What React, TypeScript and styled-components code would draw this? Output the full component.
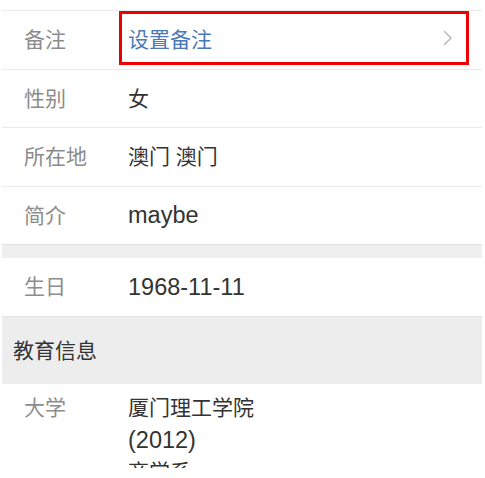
import React from "react";
import styled, { createGlobalStyle } from "styled-components";

const GlobalStyle = createGlobalStyle`
  html, body {
    margin: 0;
    padding: 0;
    background: #fff;
  }
  body {
    font-family: "Liberation Sans", "Noto Sans CJK SC", sans-serif;
  }
`;

type Item = {
  label: string;
  value: string[];
  link?: boolean;
};

const basic: Item[] = [
  { label: "备注", value: ["设置备注"], link: true },
  { label: "性别", value: ["女"] },
  { label: "所在地", value: ["澳门 澳门"] },
  { label: "简介", value: ["maybe"] },
];

const birthday: Item[] = [{ label: "生日", value: ["1968-11-11"] }];

const education: Item[] = [
  { label: "大学", value: ["厦门理工学院", "(2012)", "商学系"] },
];

// latin-only strings get a bigger size, like the system font in the shot
const isLatin = (s: string) => /^[\x00-\x7f]+$/.test(s);

const Chevron = () => (
  <svg width="10" height="16" viewBox="0 0 10 16" fill="none">
    <polyline
      points="1.5,1.5 8,8 1.5,14.5"
      stroke="#b4b4b4"
      strokeWidth="1.4"
      strokeLinecap="round"
      strokeLinejoin="round"
    />
  </svg>
);

export default function App() {
  return (
    <>
      <GlobalStyle />
      <Viewport>
        <Page>
          <TopSpacer />
          <Group>
            {basic.map((item) => (
              <Row key={item.label}>
                <Label>{item.label}</Label>
                <Value $link={item.link}>
                  <Text $latin={isLatin(item.value[0])}>{item.value[0]}</Text>
                  {item.link && <Chevron />}
                </Value>
              </Row>
            ))}
          </Group>
          <Gap />
          <Group>
            {birthday.map((item) => (
              <Row key={item.label}>
                <Label>{item.label}</Label>
                <Value>
                  <Text $latin={isLatin(item.value[0])}>{item.value[0]}</Text>
                </Value>
              </Row>
            ))}
          </Group>
          <SectionHeader>教育信息</SectionHeader>
          <Group>
            {education.map((item) => (
              <TallRow key={item.label}>
                <Label>{item.label}</Label>
                <Lines>
                  {item.value.map((line) => (
                    <Line key={line} $latin={isLatin(line)}>
                      {line}
                    </Line>
                  ))}
                </Lines>
              </TallRow>
            ))}
          </Group>
        </Page>
      </Viewport>
    </>
  );
}

const Viewport = styled.div`
  height: 468px;
  overflow: hidden;
`;

const Page = styled.div`
  margin: 0 3px 0 2px;
  background: #fff;
`;

const TopSpacer = styled.div`
  height: 10px;
  border-bottom: 1px solid #ebebeb;
`;

const Group = styled.div`
  background: #fff;
`;

const Row = styled.div`
  display: grid;
  grid-template-columns: 117px 1fr;
  align-items: center;
  height: 58.5px;
  padding: 0 13px 3px 0;
  box-sizing: border-box;
  border-bottom: 1px solid #ebebeb;
  font-size: 21px;

  &:last-child {
    border-bottom: none;
    height: 57.5px;
  }
`;

const TallRow = styled.div`
  display: grid;
  grid-template-columns: 126px 1fr;
  align-items: start;
  padding-top: 8px;
  font-size: 21px;
  line-height: 31px;
`;

const Label = styled.div`
  padding-left: 22px;
  color: #8c8c8c;
`;

const Value = styled.div<{ $link?: boolean }>`
  display: flex;
  align-items: center;
  justify-content: space-between;
  color: ${(p) => (p.$link ? "#4b79b6" : "#333")};
  height: ${(p) => (p.$link ? "54px" : "auto")};
  padding: ${(p) => (p.$link ? "0 13px 0 6px" : "0 0 0 9px")};
  border: ${(p) => (p.$link ? "3px solid #ee0000" : "none")};
  box-sizing: border-box;
`;

const Text = styled.span<{ $latin?: boolean }>`
  font-size: ${(p) => (p.$latin ? "23.5px" : "21px")};
  padding-top: ${(p) => (p.$latin ? "4px" : "0")};
`;

const Lines = styled.div`
  color: #333;
`;

const Line = styled.div<{ $latin?: boolean }>`
  font-size: ${(p) => (p.$latin ? "23.5px" : "21px")};
  padding-top: ${(p) => (p.$latin ? "2px" : "0")};
`;

const Gap = styled.div`
  height: 13px;
  background: #efefef;
  border-top: 1px solid #e2e2e2;
`;

const SectionHeader = styled.div`
  display: flex;
  align-items: center;
  height: 68px;
  padding: 0 0 2px 11px;
  box-sizing: border-box;
  background: #ededed;
  border-top: 1px solid #e4e4e4;
  color: #333;
  font-size: 21px;
`;
